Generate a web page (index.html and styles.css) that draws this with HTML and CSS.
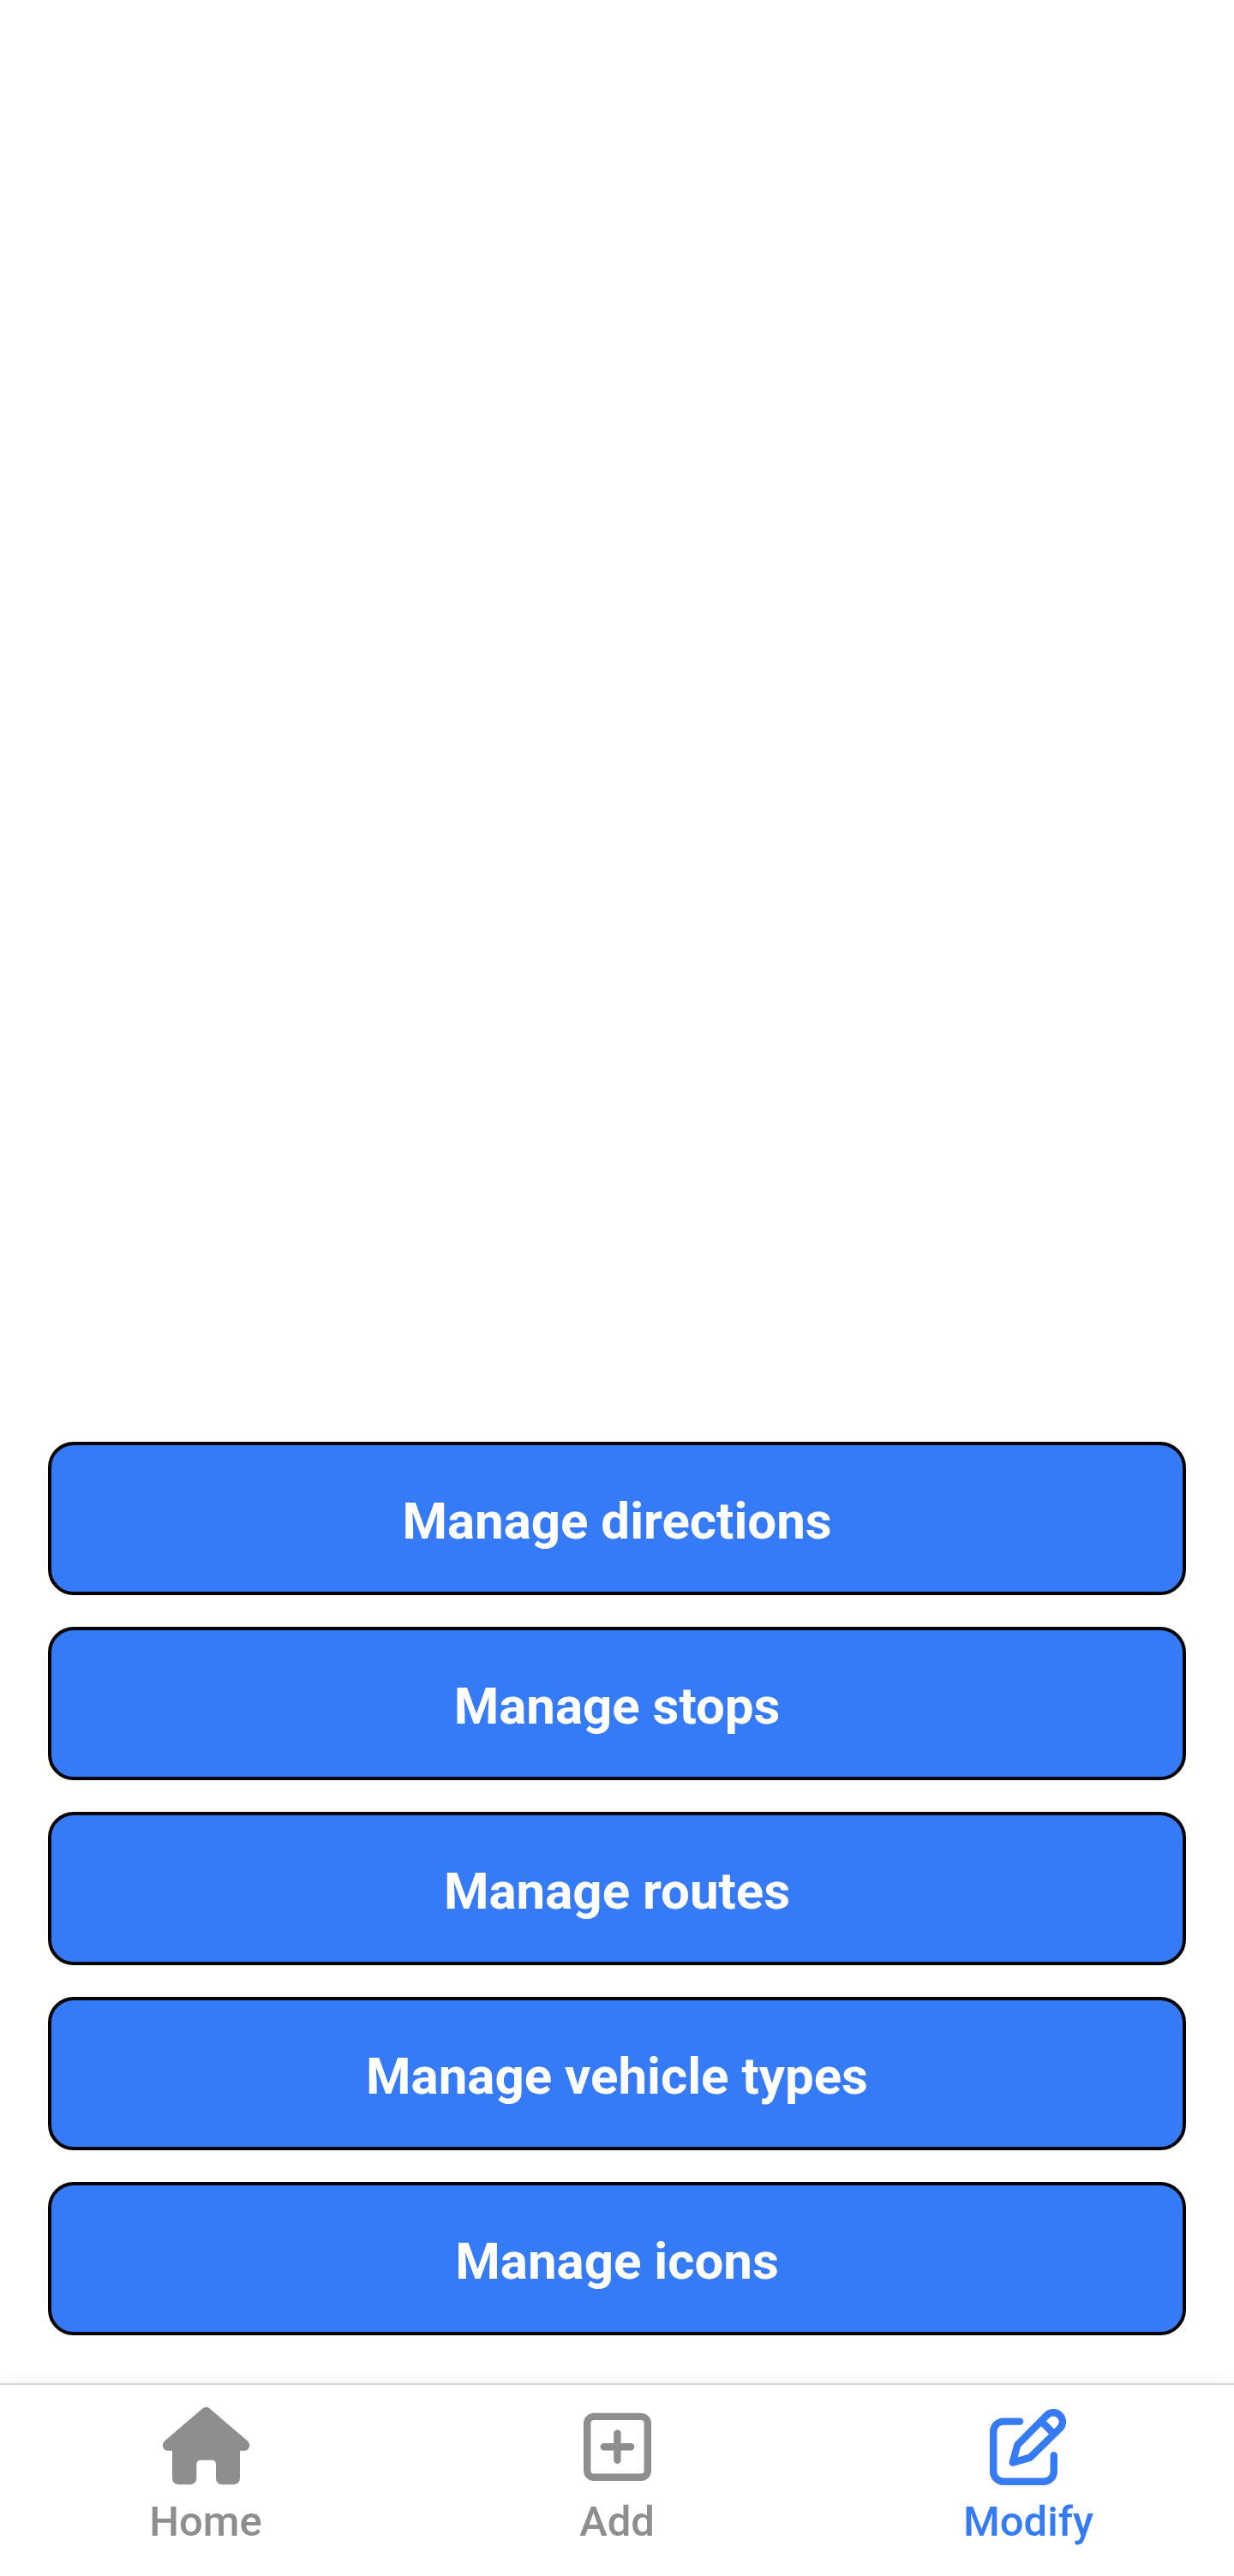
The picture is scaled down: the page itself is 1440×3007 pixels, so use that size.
FILE: index.html
```html
<!DOCTYPE html>
<html lang="en">
<head>
<meta charset="utf-8">
<title>Modify</title>
<link rel="stylesheet" href="styles.css">
</head>
<body>
<main class="actions">
  <button class="action">Manage directions</button>
  <button class="action">Manage stops</button>
  <button class="action">Manage routes</button>
  <button class="action">Manage vehicle types</button>
  <button class="action">Manage icons</button>
</main>
<nav class="tabs">
  <a class="tab">
    <svg class="icon" viewBox="0 0 104 104"><path fill="currentColor" d="M48.5 7.3Q52.5 4.3 56.5 7.3L101 45.5Q103.6 48 103 52Q101.8 56.7 97 56.7H92V88.3Q92 96.3 84 96.3H72Q64 96.3 64 88.3V73Q64 67.7 58.7 67.7H46.6Q41.3 67.7 41.3 73V88.3Q41.3 96.3 33.3 96.3H21Q13 96.3 13 88.3V56.7H8Q3.2 56.7 2 52Q1.4 48 4 45.5Z"/></svg>
    <span>Home</span>
  </a>
  <a class="tab">
    <svg class="icon" viewBox="0 0 104 104"><g class="line"><rect x="17.2" y="16.9" width="70.6" height="70.9" rx="7.8"/><path d="M52.4 36.5V67.9M36.8 52.3H68.1"/></g></svg>
    <span>Add</span>
  </a>
  <a class="tab tab-active">
    <svg class="icon" viewBox="0 0 104 104"><g class="line"><path d="M42.1 22.6H23A11.8 11.8 0 0 0 11.2 34.4V81A11.8 11.8 0 0 0 23 92.8H70A11.8 11.8 0 0 0 81.8 81V62.2"/><path d="M33.7 70.6L39.3 50L73.7 15.3A10.75 10.75 0 0 1 88.9 30.5L54.3 64.6ZM67 22.2L82 37.2"/></g></svg>
    <span>Modify</span>
  </a>
</nav>
</body>
</html>
```
FILE: styles.css
```css
* { box-sizing: border-box; }
body {
  margin: 0;
  height: 3007px;
  display: flex;
  flex-direction: column;
  background: #fff;
  font-family: Roboto, sans-serif;
}
.actions {
  flex: 1;
  display: flex;
  flex-direction: column;
  justify-content: flex-end;
  gap: 37px;
  padding: 0 56px 56px;
}
.action {
  height: 179px;
  padding: 6px 0 0;
  border: 4px solid #000;
  border-radius: 30px;
  background: #357bf8;
  color: #fff;
  font: 700 60px Roboto, sans-serif;
}
.tabs {
  height: 225px;
  display: flex;
  border-top: 2px solid #d8d8d8;
  box-shadow: 0 0 16px rgba(0, 0, 0, .06);
}
.tab {
  flex: 1;
  display: flex;
  flex-direction: column;
  align-items: center;
  gap: 7px;
  padding-top: 20px;
  color: #8e8e8f;
  font-size: 49px;
  font-weight: 500;
  line-height: 57px;
}
.icon { width: 104px; height: 104px; }
.line {
  fill: none;
  stroke: currentColor;
  stroke-width: 8.4;
  stroke-linecap: round;
  stroke-linejoin: round;
}
.tab-active { color: #357bf3; }
```
